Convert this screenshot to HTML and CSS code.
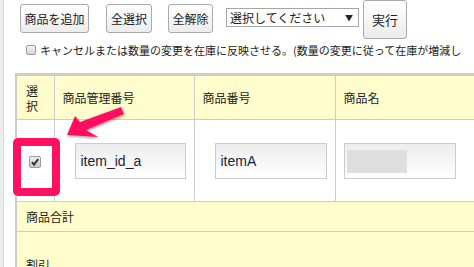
FILE: index.html
```html
<!DOCTYPE html>
<html lang="ja">
<head>
<meta charset="utf-8">
<link rel="stylesheet" href="styles.css">
</head>
<body>
<div class="page">
  <div class="inner">
    <div class="toolbar">
      <button class="btn btn-add">商品を追加</button>
      <button class="btn btn-all">全選択</button>
      <button class="btn btn-none">全解除</button>
      <div class="select"><span class="select-text">選択してください</span><span class="select-arrow">▼</span></div>
      <button class="btn btn-run">実行</button>
    </div>
    <label class="opt-line"><span class="cb-empty"></span><span class="opt-text">キャンセルまたは数量の変更を在庫に反映させる。(数量の変更に従って在庫が増減し</span></label>
    <div class="table-wrap">
      <table class="items">
        <colgroup>
          <col class="col-sel">
          <col class="col-id">
          <col class="col-code">
          <col class="col-name">
        </colgroup>
        <thead>
          <tr class="head">
            <th class="th-sel">選<br>択</th>
            <th>商品管理番号</th>
            <th>商品番号</th>
            <th>商品名</th>
          </tr>
        </thead>
        <tbody>
          <tr class="row">
            <td class="td-sel"><span class="cb-checked"><svg viewBox="0 0 12 12" width="12" height="12"><path d="M3 6.2 L5 8.6 L9.2 3.2" fill="none" stroke="#333" stroke-width="2"/></svg></span></td>
            <td><div class="field field-id">item_id_a</div></td>
            <td><div class="field field-code">itemA</div></td>
            <td><div class="field field-name"><span class="blur"></span></div></td>
          </tr>
          <tr class="sum"><td colspan="4">商品合計</td></tr>
          <tr class="disc"><td colspan="4">割引</td></tr>
        </tbody>
      </table>
    </div>
  </div>
  <div class="highlight"></div>
  <svg class="arrow" width="474" height="267" viewBox="0 0 474 267">
    <defs>
      <filter id="sh" x="-20%" y="-20%" width="140%" height="140%">
        <feDropShadow dx="1" dy="1.5" stdDeviation="1.2" flood-color="#000" flood-opacity="0.35"/>
      </filter>
    </defs>
    <polygon points="67,135 75,116 80,122 121,107 124,114 86,130 98,137" fill="#ff1160" filter="url(#sh)"/>
  </svg>
</div>
</body>
</html>
```
FILE: styles.css
```css
html, body {
  margin: 0;
  padding: 0;
  background: #fff;
  overflow: hidden;
}
body {
  width: 474px;
  height: 267px;
  font-family: "Liberation Sans", "Noto Sans CJK JP", sans-serif;
  color: #222;
}
.page {
  position: relative;
  width: 474px;
  height: 267px;
  border-left: 3px solid #ececec;
  box-sizing: border-box;
  overflow: hidden;
}
.inner {
  border-left: 1px solid #dcdcdc;
  height: 100%;
}
.toolbar {
  display: flex;
  align-items: flex-start;
  padding-left: 16px;
  height: 39px;
}
.btn {
  margin: 0;
  padding: 0;
  font-family: "Noto Sans CJK JP", sans-serif;
  font-size: 12px;
  line-height: 14px;
  color: #222;
  border: 1px solid #a9a9a9;
  border-radius: 3px;
  background: linear-gradient(#ffffff, #ececec);
  box-sizing: border-box;
}
.btn-add { margin-top: 4px; height: 29px; width: 69px; }
.btn-all { margin-top: 4px; height: 29px; width: 46px; margin-left: 17px; }
.btn-none { margin-top: 4px; height: 29px; width: 45px; margin-left: 16px; }
.btn-run { margin-top: 0; height: 39px; width: 44px; margin-left: 4px; font-size: 13px; }
.select {
  margin-top: 8px;
  margin-left: 13px;
  width: 133px;
  height: 19px;
  box-sizing: border-box;
  border: 1px solid #a6a6a6;
  display: flex;
  align-items: center;
  justify-content: space-between;
  padding: 0 5px 0 3px;
  font-family: "Noto Sans CJK JP", sans-serif;
  font-size: 12px;
  line-height: 14px;
  background: #fff;
}
.select-arrow {
  font-size: 8px;
  color: #222;
}
.opt-line {
  display: flex;
  align-items: center;
  height: 16px;
  margin-top: 3px;
  padding-left: 22px;
  font-family: "Noto Sans CJK JP", sans-serif;
  font-size: 11px;
  line-height: 14px;
  white-space: nowrap;
}
.cb-empty {
  width: 10px;
  height: 10px;
  border: 1px solid #9a9a9a;
  border-radius: 2px;
  background: linear-gradient(#f2f2f2, #d6d6d6);
  box-sizing: border-box;
  margin-right: 4px;
  flex: none;
}
.table-wrap {
  margin-top: 15px;
  margin-left: 11px;
  border-top: 3px solid #cccccc;
  border-left: 2px solid #cccccc;
}
.items {
  border-collapse: collapse;
  table-layout: fixed;
  width: 460px;
  font-family: "Noto Sans CJK JP", sans-serif;
  font-size: 12px;
  line-height: 14px;
}
.col-sel { width: 37px; }
.col-id { width: 140px; }
.col-code { width: 141px; }
.col-name { width: 142px; }
.items th, .items td {
  padding: 0 8px;
  text-align: left;
  font-weight: normal;
  border-bottom: 1px solid #cccccc;
  border-right: 1px solid #cccccc;
}
.head th {
  background: #fffdcc;
  height: 43px;
  vertical-align: middle;
}
.head .th-sel {
  padding: 0 9px;
  line-height: 15px;
}
.row td {
  background: #fff;
  height: 81px;
  vertical-align: middle;
  padding: 0;
}
.td-sel {
  text-align: center !important;
}
.cb-checked {
  display: inline-block;
  width: 12px;
  height: 12px;
  border: 1px solid #9a9a9a;
  border-radius: 2px;
  background: linear-gradient(#f0f0f0, #c8c8c8);
  box-sizing: border-box;
  vertical-align: middle;
  position: relative;
}
.cb-checked svg {
  position: absolute;
  left: -1px;
  top: -1px;
}
.field {
  height: 36px;
  box-sizing: border-box;
  border: 1px solid #cccccc;
  background: linear-gradient(#ececec, #ffffff);
  font-family: "Liberation Sans", sans-serif;
  font-size: 14px;
  line-height: 34px;
  color: #1e1e3c;
  padding-left: 5px;
}
.field-id { margin-left: 20px; width: 111px; }
.field-code { margin-left: 20px; width: 112px; }
.field-name { margin-left: 8px; width: 112px; padding: 6px 0 0 2px; }
.blur {
  display: block;
  width: 60px;
  height: 23px;
  background: #dedede;
}
.sum td {
  background: #fffdcc;
  height: 29px;
  padding-left: 9px;
  border-right: none;
}
.disc td {
  background: #fffdcc;
  height: 60px;
  padding-left: 9px;
  padding-top: 26px;
  vertical-align: top;
  border-right: none;
}
.highlight {
  position: absolute;
  left: 10px;
  top: 138px;
  width: 47px;
  height: 58px;
  box-sizing: border-box;
  border: 8px solid #ff1160;
  border-radius: 5px;
}
.arrow {
  position: absolute;
  left: -3px;
  top: 0;
}
```
